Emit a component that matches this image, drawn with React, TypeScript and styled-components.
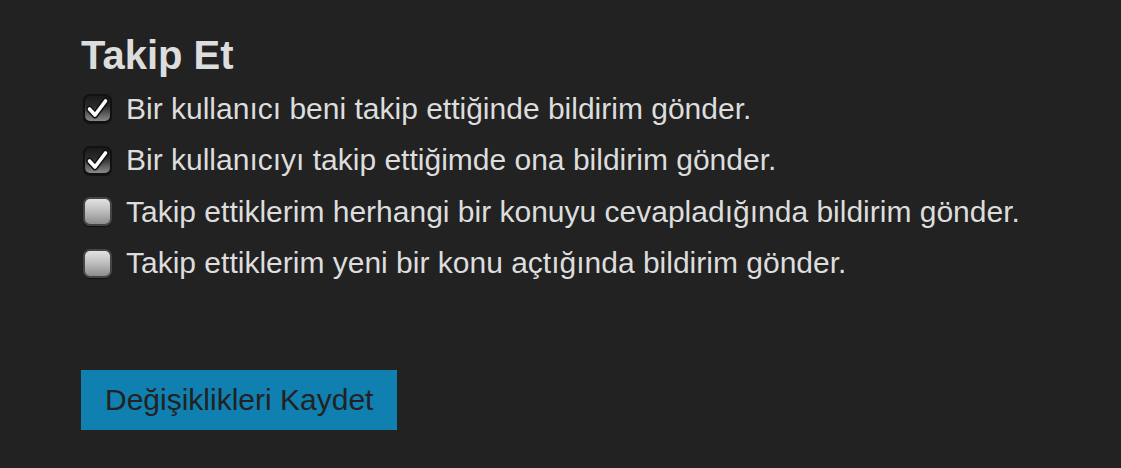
import React, { useState } from 'react';
import styled, { createGlobalStyle } from 'styled-components';

const GlobalStyle = createGlobalStyle`
  html, body {
    margin: 0;
    background: #222222;
  }
  body {
    font-family: 'Liberation Sans', Arial, Helvetica, sans-serif;
    color: #dddddd;
  }
`;

const Page = styled.main`
  padding: 33px 0 0 81px;
  display: flex;
  flex-direction: column;
  align-items: flex-start;
`;

const Title = styled.h2`
  margin: 0 0 5px;
  font-size: 40px;
  font-weight: bold;
  line-height: normal;
  color: #dddddd;
`;

const List = styled.div`
  display: flex;
  flex-direction: column;
`;

const Row = styled.label`
  display: flex;
  align-items: center;
  gap: 14px;
  height: 51.5px;
  padding-left: 2px;
  font-size: 30px;
  cursor: pointer;
`;

const Box = styled.span<{ $checked: boolean }>`
  flex: none;
  width: 29px;
  height: 29px;
  box-sizing: border-box;
  border-radius: 7px;
  border: 2px solid ${(p) => (p.$checked ? '#111' : '#444')};
  background: ${(p) =>
    p.$checked
      ? 'linear-gradient(#1a1a1a, #2a2a2a 40%, #8a8a8a)'
      : 'linear-gradient(#e2e2e2, #b8b8b8 55%, #8c8c8c)'};
  box-shadow: 0 1px 1px rgba(0, 0, 0, 0.5);
  display: flex;
  align-items: center;
  justify-content: center;
`;

const SaveButton = styled.button`
  margin-top: 81px;
  height: 60px;
  padding: 0 24px;
  border: none;
  border-radius: 0;
  background: #1080b0;
  color: #222222;
  font-family: 'Liberation Sans', Arial, Helvetica, sans-serif;
  font-size: 30px;
  cursor: pointer;
`;

const Check = () => (
  <svg width="25" height="25" viewBox="0 0 25 25">
    <path d="M4.5 13 L10 19 L20.5 5" fill="none" stroke="#111" strokeWidth="6.5" strokeLinecap="round" strokeLinejoin="round" />
    <path d="M4.5 13 L10 19 L20.5 5" fill="none" stroke="#fff" strokeWidth="3.6" strokeLinecap="round" strokeLinejoin="round" />
  </svg>
);

const options = [
  { label: 'Bir kullanıcı beni takip ettiğinde bildirim gönder.', checked: true },
  { label: 'Bir kullanıcıyı takip ettiğimde ona bildirim gönder.', checked: true },
  { label: 'Takip ettiklerim herhangi bir konuyu cevapladığında bildirim gönder.', checked: false },
  { label: 'Takip ettiklerim yeni bir konu açtığında bildirim gönder.', checked: false },
];

const App = () => {
  const [values, setValues] = useState(options.map((o) => o.checked));
  const toggle = (i: number) => setValues((v) => v.map((x, j) => (j === i ? !x : x)));
  return (
    <Page>
      <GlobalStyle />
      <Title>Takip Et</Title>
      <List>
        {options.map((o, i) => (
          <Row key={o.label} onClick={() => toggle(i)}>
            <Box $checked={values[i]}>{values[i] && <Check />}</Box>
            {o.label}
          </Row>
        ))}
      </List>
      <SaveButton>Değişiklikleri Kaydet</SaveButton>
    </Page>
  );
};

export default App;
